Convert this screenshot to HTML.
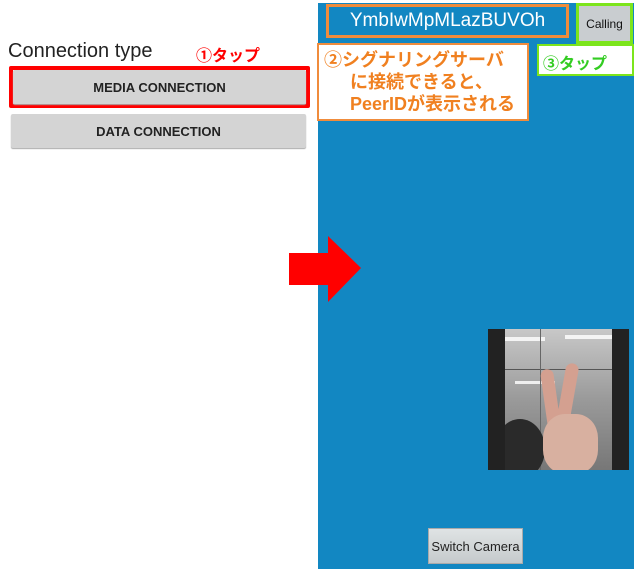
<!DOCTYPE html>
<html><head><meta charset="utf-8"><style>
*{margin:0;padding:0;box-sizing:border-box}
body{width:640px;height:569px;background:#fff;position:relative;overflow:hidden;font-family:"Liberation Sans","Noto Sans CJK JP",sans-serif}
.a{position:absolute}
.btn{background:#d4d4d4;border-radius:2px;color:#222;font-size:13px;font-weight:bold;display:flex;align-items:center;justify-content:center;box-shadow:0 1px 1px #aaa}
</style></head><body>
<div class="a" style="left:8px;top:40px;font-size:20px;color:#222">Connection type</div>
<div class="a" style="left:196px;top:42px;font-size:16px;color:#f00;font-weight:bold">①タップ</div>
<div class="a" style="left:9px;top:66px;width:301px;height:42px;border:4px solid #f00;border-radius:2px"></div>
<div class="a btn" style="left:13px;top:70px;width:293px;height:34px">MEDIA CONNECTION</div>
<div class="a btn" style="left:11px;top:114px;width:295px;height:34px">DATA CONNECTION</div>

<div class="a" style="left:318px;top:3px;width:316px;height:566px;background:#1287c2"></div>
<svg class="a" style="left:0;top:0" width="640" height="569"><polygon points="289,253 328,253 328,236 361,268 328,302 328,285 289,285" fill="#f00"/></svg>

<div class="a" style="left:326px;top:4px;width:243px;height:34px;border:3px solid #f08c3c;color:#fff;font-size:19px;display:flex;align-items:center;justify-content:center">YmbIwMpMLazBUVOh</div>
<div class="a" style="left:576px;top:3px;width:57px;height:41px;border:3px solid #7ce51c;background:#c9cdd0;font-size:12px;color:#111;display:flex;align-items:center;justify-content:center">Calling</div>
<div class="a" style="left:317px;top:43px;width:212px;height:78px;background:#fff;border:2px solid #f08c3c;color:#f08020;font-size:18px;font-weight:bold;line-height:22px;padding:4px 0 0 5px;white-space:nowrap">②シグナリングサーバ<br><span style="padding-left:26px">に接続できると、</span><br><span style="padding-left:26px">PeerIDが表示される</span></div>
<div class="a" style="left:537px;top:44px;width:97px;height:32px;background:#fff;border:2px solid #7ce51c;color:#33cc22;font-size:16px;font-weight:bold;padding:4px 0 0 4px">③タップ</div>

<div class="a" style="left:488px;top:329px;width:141px;height:141px;background:#222"></div>
<div class="a" style="left:505px;top:329px;width:107px;height:141px;background:linear-gradient(#c8c8c8,#9a9a9a 50%,#777);overflow:hidden">
<div class="a" style="left:0;top:8px;width:40px;height:4px;background:#f4f4f4"></div>
<div class="a" style="left:60px;top:6px;width:47px;height:4px;background:#f4f4f4"></div>
<div class="a" style="left:10px;top:52px;width:40px;height:3px;background:#eee"></div>
<div class="a" style="left:0;top:40px;width:107px;height:1px;background:#555"></div>
<div class="a" style="left:35px;top:0;width:1px;height:141px;background:#666"></div>
<div class="a" style="left:-10px;top:90px;width:50px;height:60px;background:#2a2a2a;border-radius:50%"></div>
<div class="a" style="left:39px;top:40px;width:13px;height:60px;background:#d4a090;border-radius:7px;transform:rotate(-8deg)"></div>
<div class="a" style="left:56px;top:34px;width:13px;height:65px;background:#d4a090;border-radius:7px;transform:rotate(10deg)"></div>
<div class="a" style="left:38px;top:85px;width:55px;height:60px;background:#d8b0a0;border-radius:40%"></div>
</div>

<div class="a" style="left:428px;top:528px;width:95px;height:36px;background:linear-gradient(#dfe3e4,#c5cacc);border:1px solid #aaa;font-size:13px;color:#222;display:flex;align-items:center;justify-content:center">Switch Camera</div>
</body></html>
